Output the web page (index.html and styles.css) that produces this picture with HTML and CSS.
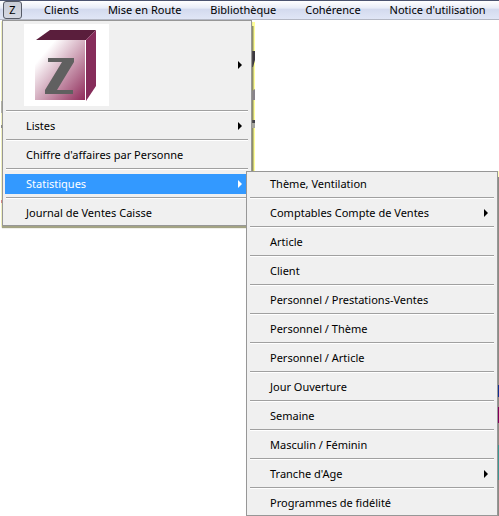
FILE: index.html
```html
<!DOCTYPE html>
<html lang="fr">
<head>
  <meta charset="UTF-8">
  <meta name="viewport" content="width=device-width, initial-scale=1.0">
  <title>Statistiques</title>
  <link rel="stylesheet" href="styles.css">
</head>
<body>
  <nav class="menubar">
    <button type="button" class="menubar-item active">Z</button>
    <button type="button" class="menubar-item">Clients</button>
    <button type="button" class="menubar-item">Mise en Route</button>
    <button type="button" class="menubar-item">Bibliothèque</button>
    <button type="button" class="menubar-item">Cohérence</button>
    <button type="button" class="menubar-item">Notice d'utilisation</button>
  </nav>

  <!-- bits of the window behind the menus -->
  <svg class="backdrop backdrop-left" width="2" height="206" aria-hidden="true">
    <rect x="1" width="1" height="206" fill="#ffffcc"/>
    <rect x="1" y="80" width="1" height="12" fill="#b5b5ad"/>
    <rect x="1" y="104" width="1" height="3" fill="#85857d"/>
    <rect x="1" y="179" width="1" height="3" fill="#e08080"/>
  </svg>
  <svg class="backdrop backdrop-top" width="3" height="206" aria-hidden="true">
    <rect width="3" height="206" fill="#ffff99"/>
    <rect y="4" width="1" height="202" fill="#8b8b62"/>
    <rect x="1" y="4" width="1" height="202" fill="#c4c47a"/>
    <path d="M0 29h3v9l-2 7H0z" fill="#3c3840"/>
    <path d="M0 69l3-2v11H0z" fill="#88848a"/>
    <rect y="98" width="3" height="3" fill="#45434a"/>
    <rect y="101" width="3" height="5" fill="#a5a5a0"/>
  </svg>
  <svg class="backdrop backdrop-right" width="1" height="345" aria-hidden="true">
    <rect width="1" height="345" fill="#8b8b84"/>
    <rect width="1" height="6" fill="#ffffbb"/>
    <rect y="214" width="1" height="12" fill="#103090"/>
    <rect y="236" width="1" height="16" fill="#80005c"/>
    <rect y="274" width="1" height="35" fill="#3c9690"/>
  </svg>

  <ul class="menu">
    <li class="menu-entry">
      <button type="button" class="menu-item menu-logo has-sub" aria-label="Z">
        <svg width="85" height="82" viewBox="0 0 85 82" aria-hidden="true">
          <defs>
            <linearGradient id="front" x1="0" y1="0" x2="1" y2="1">
              <stop offset="0.2" stop-color="#ffffff"/>
              <stop offset="0.6" stop-color="#c795ac"/>
              <stop offset="1" stop-color="#8f2a59"/>
            </linearGradient>
          </defs>
          <rect width="85" height="82" fill="#ffffff"/>
          <path d="M12 16L26 6H72L62 16Z" fill="#5a1e3c"/>
          <path d="M62 16L72 6V62L62 77Z" fill="#862c5a"/>
          <rect x="11" y="16" width="50" height="60" fill="url(#front)"/>
          <path d="M24 34H50V38L33 66H49V70H21V66L38 38H24Z" fill="#606060"/>
        </svg>
      </button>
    </li>
    <li class="menu-entry"><button type="button" class="menu-item has-sub">Listes</button></li>
    <li class="menu-entry"><button type="button" class="menu-item">Chiffre d'affaires par Personne</button></li>
    <li class="menu-entry">
      <button type="button" class="menu-item has-sub selected" aria-expanded="true">Statistiques</button>
      <ul class="menu submenu">
        <li class="menu-entry"><button type="button" class="menu-item">Thème, Ventilation</button></li>
        <li class="menu-entry"><button type="button" class="menu-item has-sub">Comptables Compte de Ventes</button></li>
        <li class="menu-entry"><button type="button" class="menu-item">Article</button></li>
        <li class="menu-entry"><button type="button" class="menu-item">Client</button></li>
        <li class="menu-entry"><button type="button" class="menu-item">Personnel / Prestations-Ventes</button></li>
        <li class="menu-entry"><button type="button" class="menu-item">Personnel / Thème</button></li>
        <li class="menu-entry"><button type="button" class="menu-item">Personnel / Article</button></li>
        <li class="menu-entry"><button type="button" class="menu-item">Jour Ouverture</button></li>
        <li class="menu-entry"><button type="button" class="menu-item">Semaine</button></li>
        <li class="menu-entry"><button type="button" class="menu-item">Masculin / Féminin</button></li>
        <li class="menu-entry"><button type="button" class="menu-item has-sub">Tranche d'Age</button></li>
        <li class="menu-entry"><button type="button" class="menu-item">Programmes de fidélité</button></li>
      </ul>
    </li>
    <li class="menu-entry"><button type="button" class="menu-item">Journal de Ventes Caisse</button></li>
  </ul>
</body>
</html>
```
FILE: styles.css
```css
body {
  margin: 0;
  min-height: 100vh;
  background: #ffffff;
  font-family: "Noto Sans", "Open Sans", sans-serif;
  font-size: 11px;
  color: #000000;
}
button {
  border: none;
  background: none;
  color: inherit;
  font: inherit;
  text-align: left;
  white-space: nowrap;
}
.menubar {
  display: flex;
  align-items: center;
  box-sizing: border-box;
  height: 20px;
  padding-left: 3px;
  border-top: 1px solid #4c5470;
  border-bottom: 1px solid #b4b8c4;
  background: linear-gradient(#ffffff, #e8ecf7 40%, #d3daee 45%, #e0e6f6);
}
.menubar-item {
  flex: none;
  padding: 0 15px 0 14px;
  line-height: 20px;
}
.menubar-item.active {
  box-sizing: border-box;
  width: 19px;
  height: 18px;
  margin-right: 8px;
  padding: 0;
  border: 1px solid #555a66;
  border-radius: 3px;
  background: linear-gradient(#c9ccd6, #d5d9e4);
  line-height: 16px;
  text-align: center;
}
.menu {
  position: relative;
  box-sizing: border-box;
  width: 250px;
  margin: 0 0 0 2px;
  padding: 2px;
  border: 1px solid #979797;
  background: #f0f0f0;
  list-style: none;
  box-shadow: 0 2px 1px #a3a384;
}
.menu-entry {
  position: relative;
}
/* grooved line between two entries */
.menu-entry + .menu-entry::before {
  content: "";
  display: block;
  height: 1px;
  margin: 3px 1px 4px;
  border-top: 1px solid #a0a0a0;
  background: #ffffff;
}
.menu-item {
  display: flex;
  align-items: center;
  justify-content: space-between;
  width: 100%;
  height: 20px;
  padding: 0 7px 0 21px;
  line-height: 20px;
}
.menu-logo {
  height: 84px;
  padding-left: 19px;
}
.has-sub::after {
  content: "";
  border: 4px solid transparent;
  border-left-color: currentColor;
  border-right: none;
}
.selected {
  background: #3399ff;
  color: #ffffff;
}
.submenu {
  position: absolute;
  top: 3px;
  left: calc(100% - 3px);
  z-index: 1;
  width: 252px;
  margin: 0;
  box-shadow: none;
}
.backdrop {
  position: absolute;
}
.backdrop-left {
  top: 21px;
  left: 0;
}
.backdrop-top {
  top: 22px;
  left: 252px;
}
.backdrop-right {
  top: 171px;
  left: 498px;
}
```
